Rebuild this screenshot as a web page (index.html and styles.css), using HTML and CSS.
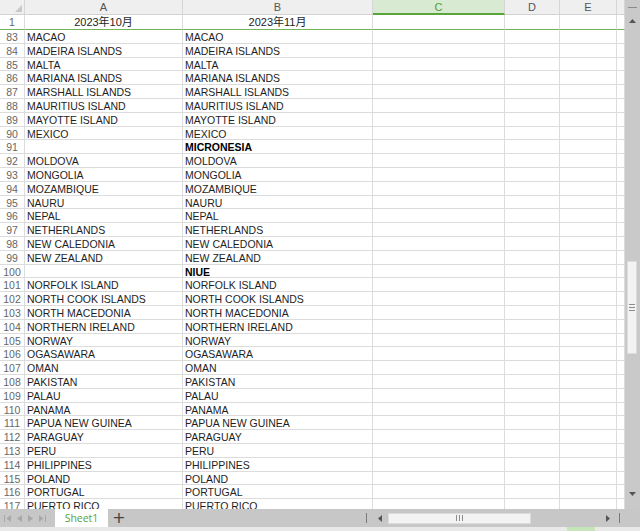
FILE: index.html
```html
<!DOCTYPE html>
<html>
<head>
<meta charset="utf-8">
<link rel="stylesheet" href="styles.css">
</head>
<body>
<div class="app">
  <div class="main">
    <div class="grid">
      <div class="row hdr">
        <div class="cell corner"><svg class="tri" width="7" height="7" viewBox="0 0 7 7"><polygon points="7,0 7,7 0,7" fill="#c8c8c8"/></svg></div>
        <div class="cell ch">A</div>
        <div class="cell ch">B</div>
        <div class="cell ch sel">C</div>
        <div class="cell ch">D</div>
        <div class="cell ch">E</div>
        <div class="cell ch"></div>
      </div>
      <div class="row first">
        <div class="cell rn">1</div>
        <div class="cell ctr">2023年10月</div>
        <div class="cell ctr">2023年11月</div>
        <div class="cell"></div><div class="cell"></div><div class="cell"></div><div class="cell"></div>
      </div>
      <div class="row"><div class="cell rn">83</div><div class="cell">MACAO</div><div class="cell">MACAO</div><div class="cell"></div><div class="cell"></div><div class="cell"></div><div class="cell"></div></div>
      <div class="row"><div class="cell rn">84</div><div class="cell">MADEIRA ISLANDS</div><div class="cell">MADEIRA ISLANDS</div><div class="cell"></div><div class="cell"></div><div class="cell"></div><div class="cell"></div></div>
      <div class="row"><div class="cell rn">85</div><div class="cell">MALTA</div><div class="cell">MALTA</div><div class="cell"></div><div class="cell"></div><div class="cell"></div><div class="cell"></div></div>
      <div class="row"><div class="cell rn">86</div><div class="cell">MARIANA ISLANDS</div><div class="cell">MARIANA ISLANDS</div><div class="cell"></div><div class="cell"></div><div class="cell"></div><div class="cell"></div></div>
      <div class="row"><div class="cell rn">87</div><div class="cell">MARSHALL ISLANDS</div><div class="cell">MARSHALL ISLANDS</div><div class="cell"></div><div class="cell"></div><div class="cell"></div><div class="cell"></div></div>
      <div class="row"><div class="cell rn">88</div><div class="cell">MAURITIUS ISLAND</div><div class="cell">MAURITIUS ISLAND</div><div class="cell"></div><div class="cell"></div><div class="cell"></div><div class="cell"></div></div>
      <div class="row"><div class="cell rn">89</div><div class="cell">MAYOTTE ISLAND</div><div class="cell">MAYOTTE ISLAND</div><div class="cell"></div><div class="cell"></div><div class="cell"></div><div class="cell"></div></div>
      <div class="row"><div class="cell rn">90</div><div class="cell">MEXICO</div><div class="cell">MEXICO</div><div class="cell"></div><div class="cell"></div><div class="cell"></div><div class="cell"></div></div>
      <div class="row"><div class="cell rn">91</div><div class="cell"></div><div class="cell bold">MICRONESIA</div><div class="cell"></div><div class="cell"></div><div class="cell"></div><div class="cell"></div></div>
      <div class="row"><div class="cell rn">92</div><div class="cell">MOLDOVA</div><div class="cell">MOLDOVA</div><div class="cell"></div><div class="cell"></div><div class="cell"></div><div class="cell"></div></div>
      <div class="row"><div class="cell rn">93</div><div class="cell">MONGOLIA</div><div class="cell">MONGOLIA</div><div class="cell"></div><div class="cell"></div><div class="cell"></div><div class="cell"></div></div>
      <div class="row"><div class="cell rn">94</div><div class="cell">MOZAMBIQUE</div><div class="cell">MOZAMBIQUE</div><div class="cell"></div><div class="cell"></div><div class="cell"></div><div class="cell"></div></div>
      <div class="row"><div class="cell rn">95</div><div class="cell">NAURU</div><div class="cell">NAURU</div><div class="cell"></div><div class="cell"></div><div class="cell"></div><div class="cell"></div></div>
      <div class="row"><div class="cell rn">96</div><div class="cell">NEPAL</div><div class="cell">NEPAL</div><div class="cell"></div><div class="cell"></div><div class="cell"></div><div class="cell"></div></div>
      <div class="row"><div class="cell rn">97</div><div class="cell">NETHERLANDS</div><div class="cell">NETHERLANDS</div><div class="cell"></div><div class="cell"></div><div class="cell"></div><div class="cell"></div></div>
      <div class="row"><div class="cell rn">98</div><div class="cell">NEW CALEDONIA</div><div class="cell">NEW CALEDONIA</div><div class="cell"></div><div class="cell"></div><div class="cell"></div><div class="cell"></div></div>
      <div class="row"><div class="cell rn">99</div><div class="cell">NEW ZEALAND</div><div class="cell">NEW ZEALAND</div><div class="cell"></div><div class="cell"></div><div class="cell"></div><div class="cell"></div></div>
      <div class="row"><div class="cell rn">100</div><div class="cell"></div><div class="cell bold">NIUE</div><div class="cell"></div><div class="cell"></div><div class="cell"></div><div class="cell"></div></div>
      <div class="row"><div class="cell rn">101</div><div class="cell">NORFOLK ISLAND</div><div class="cell">NORFOLK ISLAND</div><div class="cell"></div><div class="cell"></div><div class="cell"></div><div class="cell"></div></div>
      <div class="row"><div class="cell rn">102</div><div class="cell">NORTH COOK ISLANDS</div><div class="cell">NORTH COOK ISLANDS</div><div class="cell"></div><div class="cell"></div><div class="cell"></div><div class="cell"></div></div>
      <div class="row"><div class="cell rn">103</div><div class="cell">NORTH MACEDONIA</div><div class="cell">NORTH MACEDONIA</div><div class="cell"></div><div class="cell"></div><div class="cell"></div><div class="cell"></div></div>
      <div class="row"><div class="cell rn">104</div><div class="cell">NORTHERN IRELAND</div><div class="cell">NORTHERN IRELAND</div><div class="cell"></div><div class="cell"></div><div class="cell"></div><div class="cell"></div></div>
      <div class="row"><div class="cell rn">105</div><div class="cell">NORWAY</div><div class="cell">NORWAY</div><div class="cell"></div><div class="cell"></div><div class="cell"></div><div class="cell"></div></div>
      <div class="row"><div class="cell rn">106</div><div class="cell">OGASAWARA</div><div class="cell">OGASAWARA</div><div class="cell"></div><div class="cell"></div><div class="cell"></div><div class="cell"></div></div>
      <div class="row"><div class="cell rn">107</div><div class="cell">OMAN</div><div class="cell">OMAN</div><div class="cell"></div><div class="cell"></div><div class="cell"></div><div class="cell"></div></div>
      <div class="row"><div class="cell rn">108</div><div class="cell">PAKISTAN</div><div class="cell">PAKISTAN</div><div class="cell"></div><div class="cell"></div><div class="cell"></div><div class="cell"></div></div>
      <div class="row"><div class="cell rn">109</div><div class="cell">PALAU</div><div class="cell">PALAU</div><div class="cell"></div><div class="cell"></div><div class="cell"></div><div class="cell"></div></div>
      <div class="row"><div class="cell rn">110</div><div class="cell">PANAMA</div><div class="cell">PANAMA</div><div class="cell"></div><div class="cell"></div><div class="cell"></div><div class="cell"></div></div>
      <div class="row"><div class="cell rn">111</div><div class="cell">PAPUA NEW GUINEA</div><div class="cell">PAPUA NEW GUINEA</div><div class="cell"></div><div class="cell"></div><div class="cell"></div><div class="cell"></div></div>
      <div class="row"><div class="cell rn">112</div><div class="cell">PARAGUAY</div><div class="cell">PARAGUAY</div><div class="cell"></div><div class="cell"></div><div class="cell"></div><div class="cell"></div></div>
      <div class="row"><div class="cell rn">113</div><div class="cell">PERU</div><div class="cell">PERU</div><div class="cell"></div><div class="cell"></div><div class="cell"></div><div class="cell"></div></div>
      <div class="row"><div class="cell rn">114</div><div class="cell">PHILIPPINES</div><div class="cell">PHILIPPINES</div><div class="cell"></div><div class="cell"></div><div class="cell"></div><div class="cell"></div></div>
      <div class="row"><div class="cell rn">115</div><div class="cell">POLAND</div><div class="cell">POLAND</div><div class="cell"></div><div class="cell"></div><div class="cell"></div><div class="cell"></div></div>
      <div class="row"><div class="cell rn">116</div><div class="cell">PORTUGAL</div><div class="cell">PORTUGAL</div><div class="cell"></div><div class="cell"></div><div class="cell"></div><div class="cell"></div></div>
      <div class="row"><div class="cell rn">117</div><div class="cell">PUERTO RICO</div><div class="cell">PUERTO RICO</div><div class="cell"></div><div class="cell"></div><div class="cell"></div><div class="cell"></div></div>
    </div>
    <div class="vscroll">
      <div class="split"><span class="dash"></span></div>
      <div class="varrow"><svg width="7" height="4" viewBox="0 0 7 4"><polygon points="3.5,0 7,4 0,4" fill="#555"/></svg></div>
      <div class="vtrack">
        <div class="vthumb"><span class="grip"></span><span class="grip"></span><span class="grip"></span></div>
      </div>
      <div class="varrow down"><svg width="7" height="4" viewBox="0 0 7 4"><polygon points="0,0 7,0 3.5,4" fill="#555"/></svg></div>
    </div>
  </div>
  <div class="tabbar">
    <div class="nav">
      <svg width="7" height="7" viewBox="0 0 7 7"><rect x="0" y="0" width="1" height="7" fill="#a8a8a8"/><polygon points="7,0 7,7 2.5,3.5" fill="#a8a8a8"/></svg>
      <svg width="5" height="7" viewBox="0 0 5 7"><polygon points="5,0 5,7 0,3.5" fill="#a8a8a8"/></svg>
      <svg width="5" height="7" viewBox="0 0 5 7"><polygon points="0,0 0,7 5,3.5" fill="#a8a8a8"/></svg>
      <svg width="7" height="7" viewBox="0 0 7 7"><polygon points="0,0 0,7 4.5,3.5" fill="#a8a8a8"/><rect x="6" y="0" width="1" height="7" fill="#a8a8a8"/></svg>
    </div>
    <div class="tab">Sheet1</div>
    <div class="plus">+</div>
    <div class="hscroll">
      <span class="sep"></span>
      <svg class="harrow" width="4" height="7" viewBox="0 0 4 7"><polygon points="4,0 4,7 0,3.5" fill="#555"/></svg>
      <div class="hthumb"><span class="hgrip"></span><span class="hgrip"></span><span class="hgrip"></span></div>
      <svg class="harrow right" width="4" height="7" viewBox="0 0 4 7"><polygon points="0,0 0,7 4,3.5" fill="#555"/></svg>
      <span class="sep last"></span>
    </div>
  </div>
  <div class="status"><span class="zoom"></span></div>
</div>
</body>
</html>
```
FILE: styles.css
```css
html, body {
  margin: 0;
  padding: 0;
}
body {
  width: 640px;
  height: 531px;
  overflow: hidden;
  background: #ffffff;
  font-family: "Liberation Sans", "Noto Sans CJK JP", sans-serif;
}
.app {
  display: flex;
  flex-direction: column;
  height: 531px;
}
.main {
  display: flex;
  height: 509px;
  overflow: hidden;
}
.grid {
  width: 625px;
  overflow: hidden;
}
.row {
  display: grid;
  grid-template-columns: 25px 158px 190px 132px 55px 57px 8px;
  height: 13.8px;
}
.cell {
  box-sizing: border-box;
  border-right: 1px solid #dcdcdc;
  border-bottom: 1px solid #dcdcdc;
  font-size: 10.5px;
  line-height: 14px;
  padding-left: 2px;
  white-space: nowrap;
  overflow: hidden;
  color: #1e1e1e;
}
.bold {
  font-weight: bold;
  color: #000;
}
.ctr {
  text-align: center;
  padding-left: 0;
  font-size: 11px;
}
.rn {
  text-align: center;
  padding-left: 0;
  color: #666666;
  font-size: 10.5px;
}
.hdr {
  height: 15px;
}
.hdr .cell {
  background: #efefef;
  border-bottom: 1px solid #d2d2d2;
  border-right: 1px solid #d6d6d6;
  line-height: 15px;
}
.ch {
  text-align: center;
  padding-left: 0;
  color: #555;
  font-size: 11px;
}
.ch.sel {
  background: #d8ead1;
  color: #4f9d36;
  border-bottom: 2px solid #5aa43c;
  line-height: 14px;
}
.corner {
  display: flex;
  align-items: flex-end;
  justify-content: flex-end;
  padding: 0 2px 2px 0;
}
.first {
  height: 15px;
}
.first .cell {
  border-bottom: 1px solid #76b256;
  line-height: 15px;
}
.vscroll {
  width: 15px;
  background: #c9c9c9;
  display: flex;
  flex-direction: column;
}
.split {
  height: 14px;
  display: flex;
  align-items: center;
  justify-content: center;
}
.dash {
  width: 9px;
  height: 1px;
  background: #8a8a8a;
}
.varrow {
  height: 14px;
  display: flex;
  align-items: center;
  justify-content: center;
}
.varrow.down {
  height: 20px;
  align-items: flex-start;
  padding-top: 3px;
  box-sizing: border-box;
}
.vtrack {
  flex: 1;
  padding-left: 2px;
}
.vthumb {
  margin-top: 233px;
  width: 10px;
  height: 93px;
  box-sizing: border-box;
  background: #f3f3f3;
  border: 1px solid #dcdcdc;
  display: flex;
  flex-direction: column;
  align-items: center;
  justify-content: center;
  gap: 2px;
}
.grip {
  width: 6px;
  height: 1px;
  background: #8c8c8c;
}
.tabbar {
  height: 18px;
  background: #c7c7c7;
  display: flex;
  align-items: stretch;
}
.nav {
  width: 55px;
  display: flex;
  align-items: center;
  gap: 6px;
  padding-left: 4px;
  box-sizing: border-box;
}
.tab {
  width: 53px;
  background: #ffffff;
  color: #5aa23a;
  font-family: "Open Sans", "Liberation Sans", sans-serif;
  font-size: 10.5px;
  line-height: 18px;
  text-align: center;
}
.plus {
  width: 22px;
  text-align: center;
  font-size: 16px;
  line-height: 17px;
  color: #444;
  font-family: "DejaVu Sans", sans-serif;
}
.hscroll {
  margin-left: auto;
  width: 274px;
  display: flex;
  align-items: center;
}
.sep {
  width: 1px;
  height: 10px;
  background: #7a7a7a;
}
.harrow {
  margin-left: 11px;
}
.hthumb {
  margin-left: 6px;
  width: 143px;
  height: 11px;
  box-sizing: border-box;
  background: #f3f3f3;
  border: 1px solid #dcdcdc;
  display: flex;
  align-items: center;
  justify-content: center;
  gap: 2px;
}
.hgrip {
  width: 1px;
  height: 6px;
  background: #8c8c8c;
}
.harrow.right {
  margin-left: 75px;
}
.sep.last {
  margin-left: 9px;
}
.status {
  flex: 1;
  background: #e9e9e9;
}
.zoom {
  display: block;
  margin-left: 567px;
  width: 28px;
  height: 4px;
  background: #c6e5b8;
}
```
